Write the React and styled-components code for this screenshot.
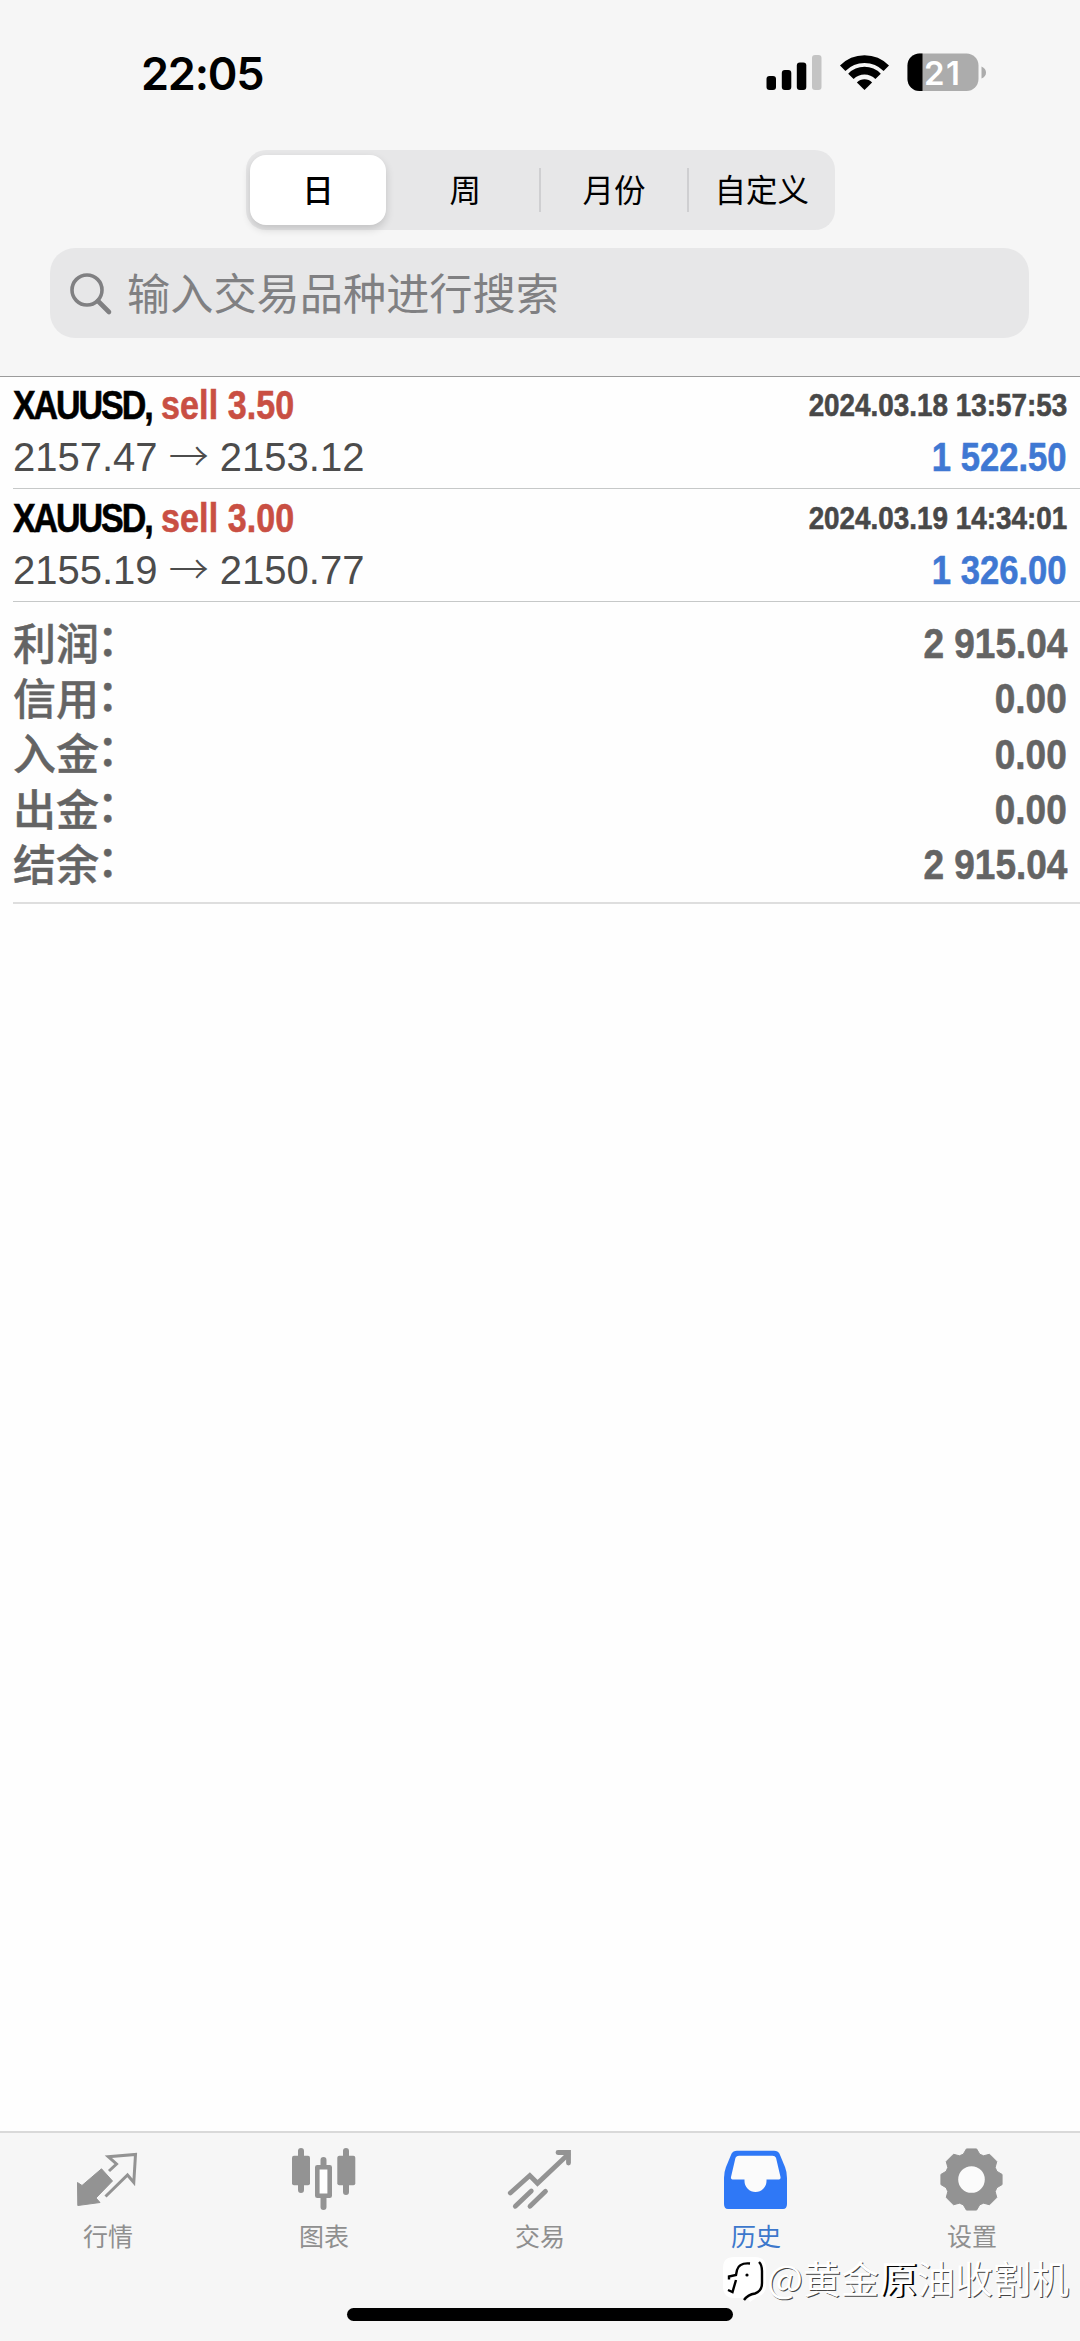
import React from 'react';
import styled, {createGlobalStyle} from 'styled-components';

const GlobalStyle = createGlobalStyle`
  * {
    box-sizing: border-box;
  }
  body {
    margin: 0;
    background: #fefefe;
    font-family: 'Liberation Sans', 'Noto Sans CJK SC', sans-serif;
  }
`;

const Screen = styled.div`
  position: relative;
  display: flex;
  flex-direction: column;
  width: 1080px;
  height: 2341px;
  overflow: hidden;
  background: #fefefe;
`;

const Header = styled.header`
  display: flex;
  flex-direction: column;
  align-items: center;
  height: 377px;
  background: #f6f6f6;
  border-bottom: 1px solid #9b9b9b;
`;

const StatusBar = styled.div`
  display: flex;
  align-items: center;
  justify-content: space-between;
  width: 100%;
  height: 150px;
  padding: 0 94px 4px 141px;
`;

const Clock = styled.span`
  padding-top: 2px;
  color: #000;
  font: 600 45px/50px Inter, sans-serif;
  letter-spacing: -1.2px;
`;

const StatusIcons = styled.svg`
  display: block;
  width: 220px;
  height: 40px;
`;

const Segments = styled.div`
  display: flex;
  align-items: center;
  width: 589px;
  height: 80px;
  border-radius: 20px;
  background: #e7e7e8;
`;

const Segment = styled.div`
  display: flex;
  align-items: center;
  justify-content: center;
  width: ${p => (p.$active ? 137 : 148)}px;
  height: ${p => (p.$active ? 70 : 44)}px;
  margin-left: ${p => (p.$active ? 4 : 0)}px;
  margin-right: ${p => (p.$active ? 5 : 0)}px;
  padding-bottom: 3px;
  border-left: ${p => (p.$line ? '2px solid #cfcfd1' : 'none')};
  border-radius: ${p => (p.$active ? 16 : 0)}px;
  background: ${p => (p.$active ? '#fff' : 'transparent')};
  box-shadow: ${p => (p.$active ? '0 4px 8px rgba(0, 0, 0, 0.16)' : 'none')};
  color: #000;
  font: ${p => (p.$active ? 500 : 400)} 31.5px/41px 'Noto Sans CJK SC', sans-serif;
`;

const SearchField = styled.div`
  display: flex;
  align-items: center;
  gap: 14px;
  width: 979px;
  height: 90px;
  margin: 18px 0 0 -1px;
  padding: 0 0 4px 19px;
  border-radius: 25px;
  background: #e7e7e8;
  color: #808082;
  font: 400 43.2px/60px 'Noto Sans CJK SC', sans-serif;
`;

const SearchGlyph = styled.svg`
  width: 44px;
  height: 44px;
  margin-top: 5px;
`;

const Content = styled.main`
  flex: 1;
  padding-left: 13px;
`;

const Deal = styled.div`
  height: ${p => (p.$first ? 112 : 113)}px;
  padding: ${p => (p.$first ? 4 : 5)}px 13px 0 0;
  border-bottom: 1px solid #c6c8c8;
`;

const Line = styled.div`
  display: flex;
  align-items: center;
  justify-content: space-between;
  height: ${p => p.$height}px;
`;

// Condensed bold face: the regular bold squeezed towards one edge.
const Condensed = styled.span`
  display: inline-block;
  transform: scaleX(${p => p.$scale || 0.83});
  transform-origin: ${p => p.$origin || 'left'} center;
  color: ${p => p.$color};
  font-size: ${p => p.$size}px;
  font-weight: 700;
  white-space: pre;
  -webkit-text-stroke: 0.6px currentColor;
`;

const Ticker = styled.span`
  letter-spacing: -2.5px;
`;

const Side = styled.span`
  color: #c94f43;
  letter-spacing: 0.1px;
`;

const Prices = styled.span`
  color: #4c4c4c;
  font-size: 40px;
  white-space: pre;
`;

const Arrow = styled.span`
  font-family: 'Noto Sans CJK SC', sans-serif;
  font-size: 40px;
  font-weight: 300;
  line-height: 1;
`;

const Summary = styled.div`
  height: 302px;
  padding: 14px 13px 0 0;
  border-bottom: 2px solid #dedede;
`;

const SummaryLabel = styled.span`
  display: flex;
  margin-top: -6px;
  color: #646464;
  font: 500 43px/44px 'Noto Sans CJK SC', sans-serif;
  -webkit-text-stroke: 0.4px currentColor;
`;

// The colon sits at mid height of the characters, not on the baseline.
const Colon = styled.span`
  margin: -4px 0 0 -2px;
`;

const TabBar = styled.nav`
  display: flex;
  height: 210px;
  background: #f6f6f6;
  border-top: 2px solid #d9d9d9;
`;

const Tab = styled.div`
  display: flex;
  flex-direction: column;
  align-items: center;
  width: 216px;
  padding-top: 12px;
  color: ${p => (p.$active ? '#2f78f6' : '#939393')};
`;

const TabIcon = styled.svg`
  display: block;
  width: 66px;
  height: 68px;
`;

const TabLabel = styled.span`
  margin-top: 4px;
  color: ${p => (p.$active ? '#3d78cc' : '#8f8f8f')};
  font: 400 25px/36px 'Noto Sans CJK SC', sans-serif;
`;

const HomeIndicator = styled.div`
  position: absolute;
  left: 347px;
  bottom: 20px;
  width: 386px;
  height: 13px;
  border-radius: 7px;
  background: #000;
`;

const Watermark = styled.div`
  position: absolute;
  right: 11px;
  bottom: 38px;
  display: flex;
  align-items: center;
  color: #fff;
  font: 400 38px/46px 'Noto Sans CJK SC', sans-serif;
  text-shadow: 1px 1px 0 #444;
`;

const WatermarkLogo = styled.svg`
  width: 48px;
  height: 48px;
  margin: 4px -2px 0 0;
`;

const Heavy = styled.span`
  text-shadow: 2px 1px 0 #000;
`;

const deals = [
  {volume: '3.50', open: '2157.47', close: '2153.12', time: '2024.03.18 13:57:53', profit: '1 522.50'},
  {volume: '3.00', open: '2155.19', close: '2150.77', time: '2024.03.19 14:34:01', profit: '1 326.00'},
];

const totals = [
  ['利润', '2 915.04'],
  ['信用', '0.00'],
  ['入金', '0.00'],
  ['出金', '0.00'],
  ['结余', '2 915.04'],
];

const Status = () => (
  <StatusIcons viewBox="766 53 220 40">
    <g fill="#000">
      <rect x="766.5" y="76" width="9.5" height="14" rx="3" />
      <rect x="781.8" y="70" width="9.5" height="20" rx="3" />
      <rect x="796.8" y="62.5" width="9.5" height="27.5" rx="3" />
      <rect x="812" y="55" width="9.5" height="35" rx="3" fill="#c4c4c4" />
    </g>
    <g fill="none" stroke="#000" strokeWidth="7.6">
      <path d="M842.7 68.2a30.8 31 0 0 1 43.6 0" />
      <path d="M850.9 76.4a19.200 19.500 0 0 1 27.200 0" />
    </g>
    <path d="M864.5 90l-7.6-7.6a10.8 10.8 0 0 1 15.2 0z" fill="#000" />
    <clipPath id="battery">
      <rect x="907.5" y="53.5" width="71" height="37.5" rx="12" />
    </clipPath>
    <g clipPath="url(#battery)">
      <rect x="907" y="53" width="72" height="38" fill="#acacac" />
      <rect x="907" y="53" width="15.5" height="38" fill="#000" />
    </g>
    <path d="M981.5 66.5q4.5 2 4.5 6t-4.5 6z" fill="#acacac" />
    <text x="924" y="84.5" fill="#fff" fontFamily="Inter, sans-serif" fontWeight="600" fontSize="33" textLength="36">21</text>
  </StatusIcons>
);

const QuotesIcon = () => (
  <TabIcon viewBox="0 0 66 68">
    <path d="M2.5 37.5L7 40.5 26.5 23.8 37.5 36 21 53l4 4.5L2.8 60.5z" fill="currentColor" stroke="currentColor" strokeLinejoin="round" />
    <path d="M34 26l7.5-7-8.2-7.3L60.5 9.5l-1.7 28L52.5 30 30.5 51.5" fill="none" stroke="currentColor" strokeWidth="3" />
  </TabIcon>
);

const ChartIcon = () => (
  <TabIcon viewBox="0 0 66 68">
    <g stroke="currentColor" strokeWidth="6" strokeLinecap="round">
      <path d="M10 6v39M55 6v41M32.5 15v10M32.5 52v10" />
    </g>
    <rect x="1" y="10.7" width="18" height="29.5" rx="2" fill="currentColor" />
    <rect x="46.3" y="10.7" width="18" height="29.5" rx="2" fill="currentColor" />
    <rect x="26.3" y="22.3" width="12.4" height="28.4" fill="#fff" stroke="currentColor" strokeWidth="4.6" strokeLinejoin="round" />
  </TabIcon>
);

const TradeIcon = () => (
  <TabIcon viewBox="0 0 66 68">
    <g fill="none" stroke="currentColor" strokeWidth="4.8" strokeLinecap="round">
      <path d="M3.3 48L22.8 30.5 30.5 38.3 61 9.5" />
      <path d="M51 7.5h10.5V18" />
      <path d="M8.3 61.3L24.3 46M23 61.3L38.5 46.3" />
    </g>
  </TabIcon>
);

const HistoryIcon = () => (
  <TabIcon viewBox="0 0 66 68">
    <path d="M14 5.7H51q4 0 5.5 3L62 22q2 5 2 11v26q0 5-4 5H5q-4 0-4-5V33q0-6 2-11L8.5 8.7q1.5-3 5.500-3z" fill="currentColor" />
    <path d="M16 10.7H49.500q2.500 0 3.500 2L57.500 32q.4 2.500-1.500 2.500H43.500V36a11 11 0 0 1-22 0v-1.500H9.500Q7.600 34.500 8 32L12.500 12.700q1-2 3.500-2z" fill="#fbfbfb" />
  </TabIcon>
);

const gearPoints = Array.from({length: 8}).flatMap((_, tooth) => (
  [[-18, 26.6], [-9.5, 31], [9.5, 31], [18, 26.6]].map(([offset, radius]) => {
    const angle = (tooth * 45 + offset) * Math.PI / 180;
    return `${(32.5 + radius * Math.sin(angle)).toFixed(2)},${(34.5 - radius * Math.cos(angle)).toFixed(2)}`;
  })
)).join(' ');

const SettingsIcon = () => (
  <TabIcon viewBox="0 0 66 68">
    <polygon points={gearPoints} fill="currentColor" stroke="currentColor" strokeWidth="1" strokeLinejoin="round" />
    <circle cx="32.5" cy="34.5" r="13.3" fill="#fbfbfb" />
  </TabIcon>
);

const tabs = [
  ['行情', QuotesIcon],
  ['图表', ChartIcon],
  ['交易', TradeIcon],
  ['历史', HistoryIcon],
  ['设置', SettingsIcon],
];

export default function App() {
  return (
    <Screen>
      <GlobalStyle />
      <Header>
        <StatusBar>
          <Clock>22:05</Clock>
          <Status />
        </StatusBar>
        <Segments>
          <Segment $active>日</Segment>
          <Segment>周</Segment>
          <Segment $line>月份</Segment>
          <Segment $line>自定义</Segment>
        </Segments>
        <SearchField>
          <SearchGlyph viewBox="0 0 44 44" fill="none" stroke="currentColor">
            <circle cx="18" cy="18" r="15" strokeWidth="3.6" />
            <path d="M29 29l11 11" strokeWidth="4.6" strokeLinecap="round" />
          </SearchGlyph>
          输入交易品种进行搜索
        </SearchField>
      </Header>
      <Content>
        {deals.map((deal, i) => (
          <Deal key={deal.time} $first={i === 0}>
            <Line $height={48}>
              <Condensed $size={41} $color="#000">
                <Ticker>XAUUSD,</Ticker> <Side>sell {deal.volume}</Side>
              </Condensed>
              <Condensed $size={32} $scale={0.87} $color="#484848" $origin="right">{deal.time}</Condensed>
            </Line>
            <Line $height={56}>
              <Prices>{deal.open} <Arrow>→</Arrow> {deal.close}</Prices>
              <Condensed $size={41} $scale={0.845} $color="#3f78d3" $origin="right">{deal.profit}</Condensed>
            </Line>
          </Deal>
        ))}
        <Summary>
          {totals.map(([label, value]) => (
            <Line key={label} $height={55.3}>
              <SummaryLabel>{label}<Colon>：</Colon></SummaryLabel>
              <Condensed $size={43} $scale={0.86} $color="#646464" $origin="right">{value}</Condensed>
            </Line>
          ))}
        </Summary>
      </Content>
      <TabBar>
        {tabs.map(([label, Icon]) => (
          <Tab key={label} $active={label === '历史'}>
            <Icon />
            <TabLabel $active={label === '历史'}>{label}</TabLabel>
          </Tab>
        ))}
      </TabBar>
      <HomeIndicator />
      <Watermark>
        <WatermarkLogo viewBox="0 0 48 48">
          <path d="M13 2h21q11 0 11 11v17q0 10-9 12l-7 5-3-4H13Q2 43 2 31V13Q2 2 13 2z" fill="#fff" />
          <g fill="none" stroke="#000" strokeWidth="2.4">
            <path d="M29 8.500q-11-1-13 6.500l-1 5-7 1.500v3" />
            <path d="M15 25l-3.500 12-4.500-2" />
            <path d="M38 7q3 3 3 9v12q0 8-7 10.500-7 1-11 6.500" />
          </g>
          <circle cx="26" cy="20" r="1.600" />
        </WatermarkLogo>
        @黄金<Heavy>原</Heavy>油收割机
      </Watermark>
    </Screen>
  );
}
